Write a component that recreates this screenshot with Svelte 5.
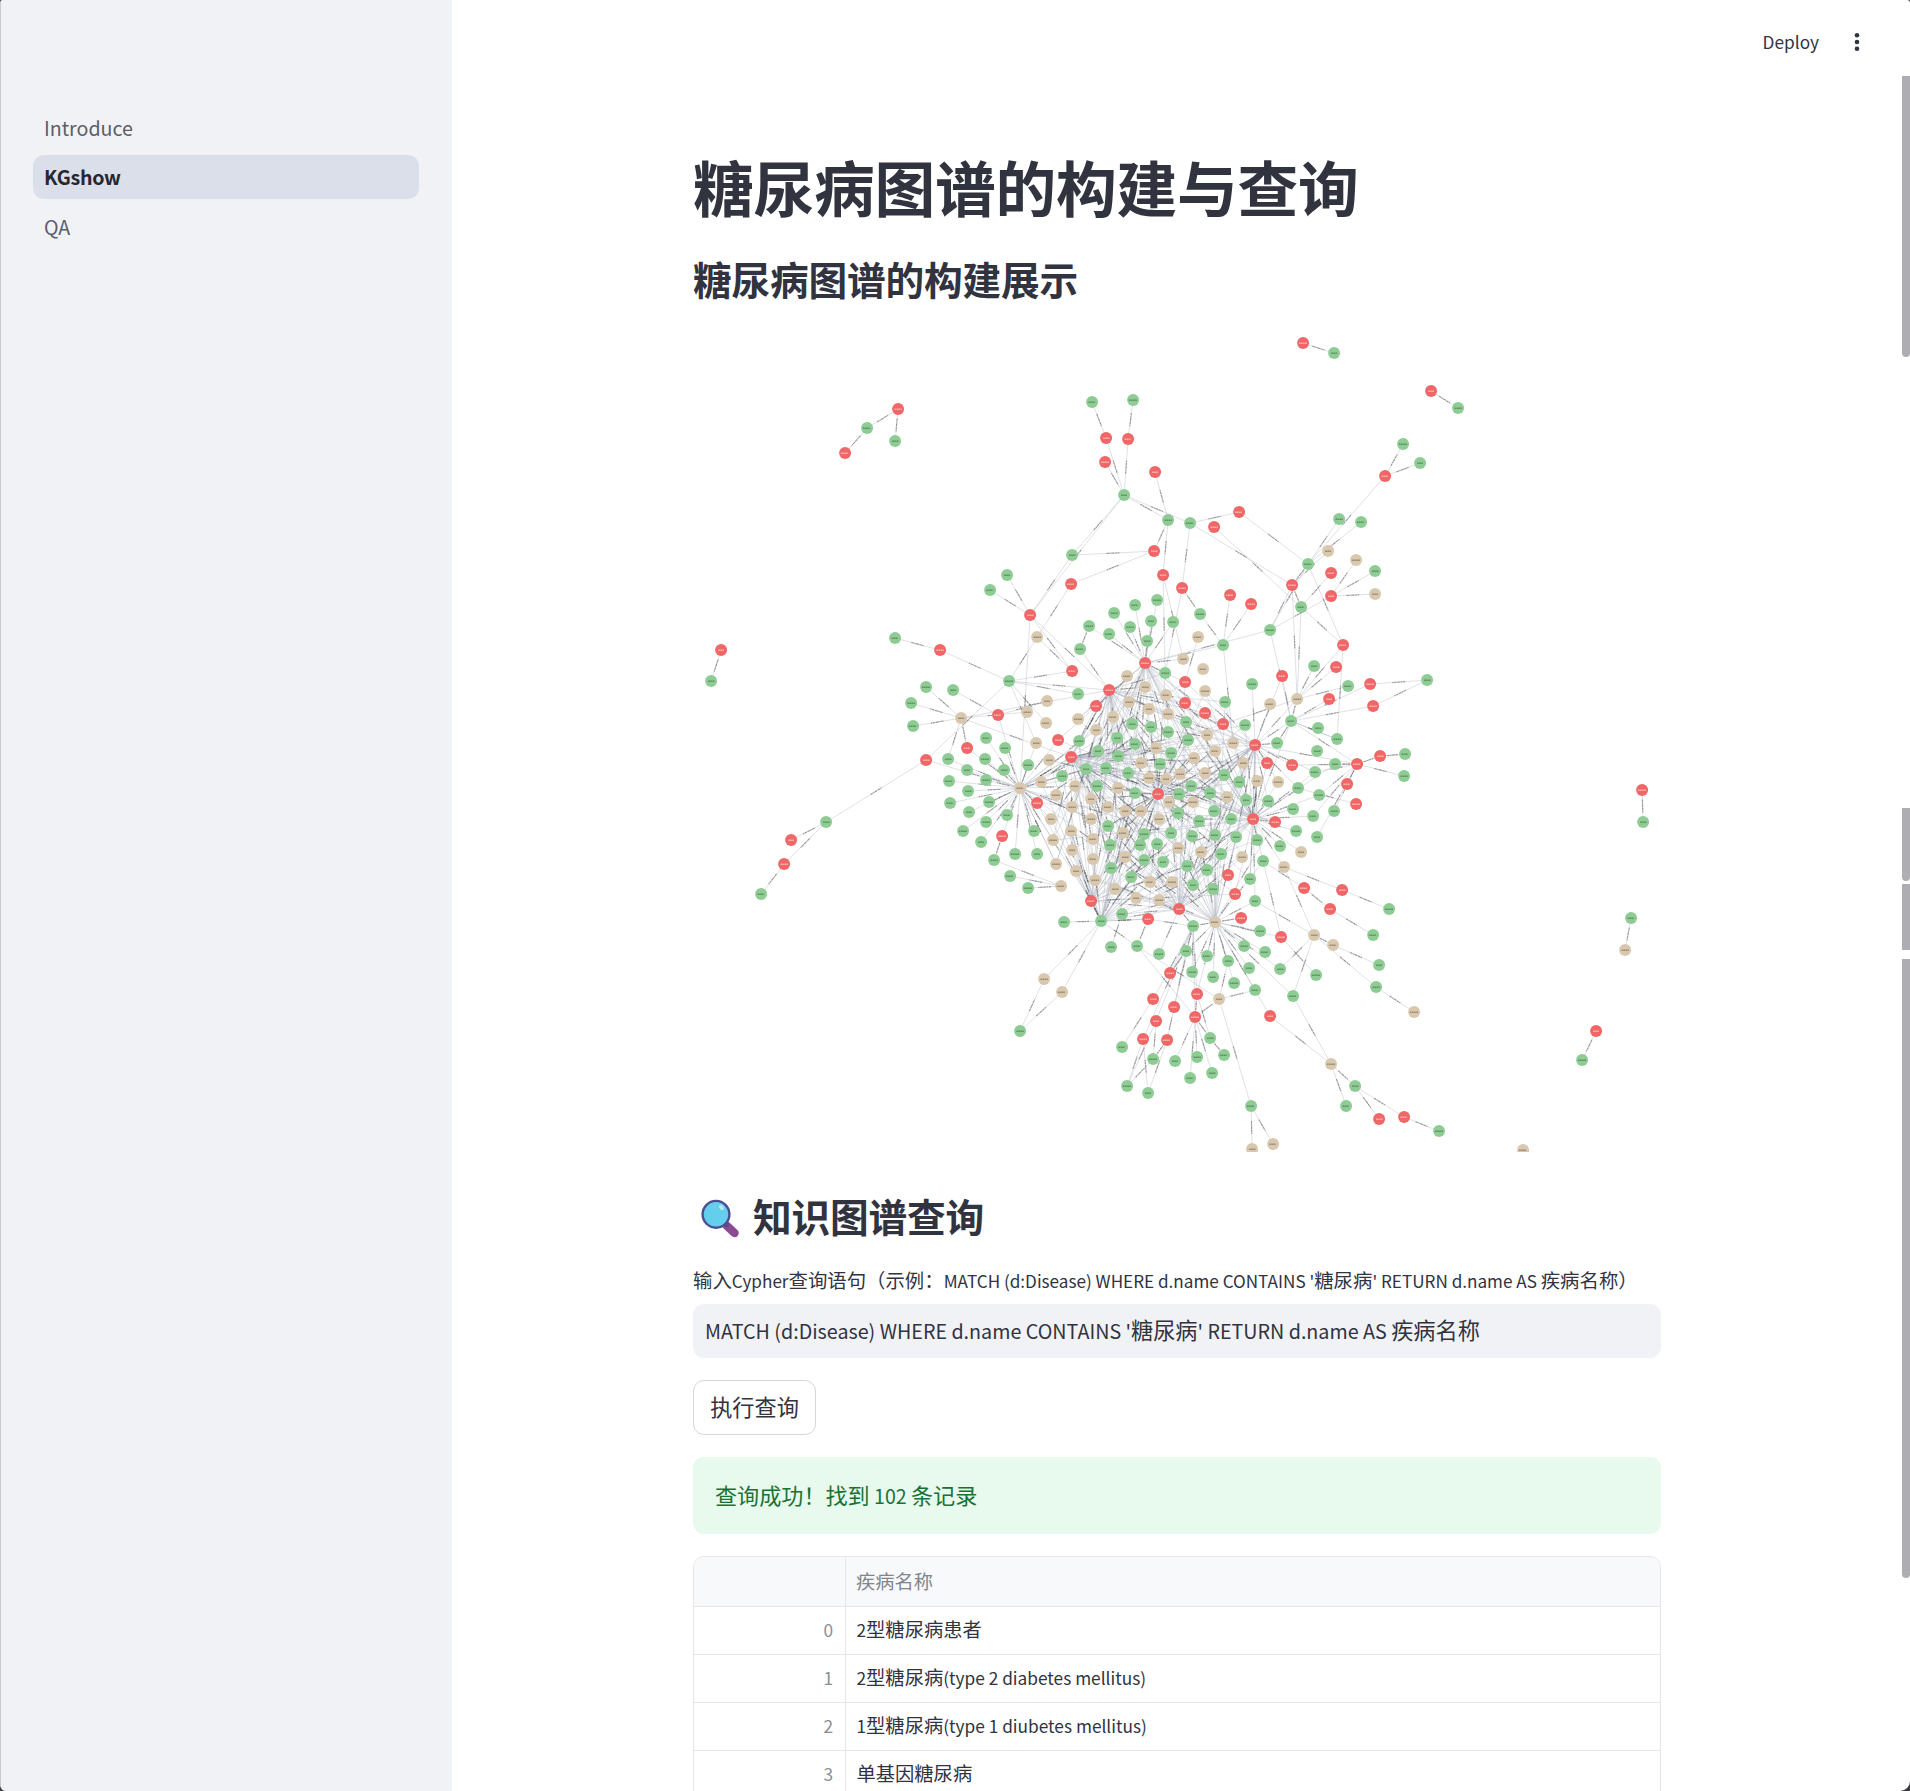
<script>
  const pages = [
    { name: 'Introduce', active: false },
    { name: 'KGshow', active: true },
    { name: 'QA', active: false }
  ];

  const query = "MATCH (d:Disease) WHERE d.name CONTAINS '糖尿病' RETURN d.name AS 疾病名称";
  const label = '输入Cypher查询语句（示例：' + query + '）';
  const rows = [
    '2型糖尿病患者',
    '2型糖尿病(type 2 diabetes mellitus)',
    '1型糖尿病(type 1 diubetes mellitus)',
    '单基因糖尿病'
  ];

  // Splits a string into Latin and Chinese runs so that each gets its own size.
  const runs = (s) =>
    (s.match(/[\x20-\x7e]+|[^\x20-\x7e]+/g) ?? []).map((t) => ({ t, latin: t.charCodeAt(0) < 127 }));

  const parse = (s) => s.trim().split(/\s+/).map((p) => p.split(',').map(Number));

  const red = parse(`
    721,650 940,650 998,715 926,760 967,748 1002,836 791,840 784,864 1071,584 1030,615 1072,671
    1145,663 1163,575 1182,588 1230,595 1185,682 1185,703 1205,713 1223,724 1109,690 1096,706
    1058,740 1331,573 1292,585 1331,596 1251,604 1343,645 1336,667 1282,676 1370,684 1329,699
    1373,706 1255,745 1071,757 1158,794 1037,803 1228,875 1235,894 1091,901 1179,909 1148,919
    1241,918 1267,763 1292,765 1357,764 1380,756 1347,784 1356,804 1253,819 1275,822 1304,888
    1342,890 1330,909 1281,937 1270,1016 1170,973 1197,994 1153,999 1174,1007 1195,1017
    1156,1021 1143,1039 1167,1040 1379,1119 1404,1117 1303,343 1431,391 898,409 845,453 1106,438
    1128,439 1105,462 1155,472 1214,527 1239,512 1154,551 1385,476 1642,790 1596,1031`);

  const green = parse(`
    711,681 895,638 926,687 953,690 911,703 913,726 948,759 986,738 985,759 967,770 986,780
    949,781 968,791 950,803 989,802 969,812 986,822 1005,748 1004,770 1007,815 963,831 981,842
    994,860 1010,876 826,822 761,894 1009,681 1007,575 1089,626 1080,649 1114,613 1135,605
    1157,600 1151,621 1130,627 1109,634 1147,641 1173,622 1200,614 1223,645 1165,673 1225,702
    1132,724 1151,727 1168,732 1186,722 1188,740 1135,744 1117,738 1078,694 1079,741 1098,751
    1171,753 1308,564 1375,571 1301,607 1270,630 1314,666 1252,684 1348,686 1427,680 1291,721
    1245,725 1318,728 1337,739 1277,743 1317,751 1405,754 1028,765 1086,769 1062,776 1106,768
    1118,756 1128,773 1160,764 1224,775 1191,786 1179,794 1210,793 1135,793 1097,786 1178,813
    1199,821 1214,811 1231,819 1108,826 1144,834 1171,833 1192,836 1215,835 1236,837 1034,831
    1015,854 1037,854 1110,845 1140,845 1157,844 1221,854 1144,860 1163,862 1187,866 1207,870
    1111,868 1131,877 1028,888 1193,885 1213,889 1122,914 1101,921 1064,922 1193,926 1335,764
    1404,776 1315,772 1239,782 1298,788 1319,795 1246,800 1268,801 1293,809 1334,811 1313,816
    1296,831 1317,837 1257,840 1280,846 1263,861 1250,879 1389,909 1255,901 1260,931 1373,935
    1111,947 1137,946 1159,954 1186,951 1192,972 1207,956 1228,961 1213,977 1234,983 1249,968
    1244,946 1265,952 1280,969 1255,990 1316,975 1379,965 1376,987 1293,996 1210,1038 1122,1047
    1153,1059 1175,1061 1197,1057 1224,1055 1212,1073 1190,1078 1127,1086 1148,1093 1020,1031
    1251,1106 1355,1086 1346,1106 1439,1131 1334,353 1458,408 867,428 895,441 1092,402 1133,400
    1124,495 1168,520 1190,523 1072,555 990,590 1403,444 1420,463 1339,519 1361,522 1643,822
    1631,918 1582,1060`);

  const tan = parse(`
    961,718 1037,637 1198,637 1183,659 1203,669 1205,691 1207,735 1233,743 1127,676 1145,687
    1166,695 1168,714 1149,709 1129,702 1113,717 1096,730 1156,748 1078,719 1047,701 1027,712
    1046,723 1036,743 1215,751 1356,560 1375,594 1297,699 1270,704 1049,760 1141,763 1149,778
    1166,779 1180,774 1194,758 1205,773 1169,802 1193,802 1227,797 1118,788 1075,786 1041,782
    1020,788 1056,795 1091,799 1072,807 1108,807 1125,811 1141,811 1159,819 1051,819 1091,819
    1123,833 1071,831 1093,839 1053,840 1072,850 1178,848 1201,852 1125,857 1093,859 1056,864
    1076,871 1095,880 1061,886 1115,889 1150,882 1172,882 1136,898 1159,900 1215,922 1243,763
    1257,781 1278,782 1301,852 1242,857 1284,867 1314,935 1333,945 1414,1012 1219,999 1044,979
    1062,992 1252,1149 1273,1144 1331,1064 1328,551 1625,950 1523,1150`);

  const nodes = [
    ...tan.map(([x, y]) => ({ x, y, kind: 'tan' })),
    ...green.map(([x, y]) => ({ x, y, kind: 'green' })),
    ...red.map(([x, y]) => ({ x, y, kind: 'red' }))
  ];

  // One hub per line, followed by the nodes that it is linked to.
  const fans = `
    1303,343 1334,353
    1431,391 1458,408
    867,428 898,409 845,453
    898,409 895,441
    1092,402 1106,438
    1133,400 1128,439
    1124,495 1106,438 1128,439 1105,462 1190,523 1030,615 1168,520
    1168,520 1155,472 1154,551 1163,575
    1190,523 1182,588 1239,512 1292,585
    1239,512 1308,564
    1072,555 1124,495 1154,551 1030,615
    1154,551 1071,584
    1030,615 1007,575 990,590 1109,690 1020,788 1072,671
    1037,637 1071,584 1009,681 1072,671
    1385,476 1403,444 1420,463 1308,564
    1308,564 1339,519 1361,522 1292,585 1343,645 1270,630
    1292,585 1328,551 1270,630 1297,699
    1331,596 1356,560 1375,571 1375,594 1270,630
    1301,607 1331,573 1214,527 1343,645 1297,699 1292,585
    1270,630 1291,721 1145,663
    1297,699 1343,645 1336,667 1348,686 1314,666 1291,721 1255,745 1223,724
    1337,739 1343,645 1291,721
    1427,680 1370,684 1373,706
    1291,721 1370,684 1373,706 1329,699 1282,676 1255,745 1357,764 1337,739 1277,743 1253,819
    1223,645 1230,595 1251,604 1200,614 1145,663 1233,743
    1200,614 1182,588
    1163,575 1165,673 1183,659
    1182,588 1165,673
    1198,637 1185,682
    1145,663 1089,626 1114,613 1135,605 1157,600 1151,621 1130,627 1109,634 1147,641 1173,622 1183,659 1185,682 1165,673
    1089,626 1080,649
    1080,649 1109,690
    1009,681 940,650 926,760 1072,671 1109,690 1078,694 1046,723 1036,743
    895,638 940,650
    961,718 926,687 911,703 913,726 948,759 967,748 1071,757 1109,690 1027,712
    998,715 953,690 1047,701 1020,788
    1020,788 967,748 948,759 986,738 985,759 967,770 986,780 949,781 968,791 950,803 989,802 969,812 986,822 1005,748 1004,770 1007,815 963,831 981,842 1002,836 926,760 1015,854 1037,854 1034,831 1037,803 1028,765 1041,782 1051,819 1056,864 1053,840 1071,757 1036,743
    1061,886 994,860 1010,876 1028,888
    1002,836 994,860
    826,822 926,760 791,840 784,864
    784,864 761,894
    721,650 711,681
    1357,764 1380,756 1404,776 1347,784 1335,764 1334,811 1319,795 1292,765 1317,837 1315,772 1313,816
    1380,756 1405,754
    1356,804 1298,788
    1253,819 1298,788 1315,772 1319,795 1293,809 1296,831 1280,846 1301,852 1313,816 1275,822 1257,840 1263,861 1284,867 1278,782 1257,781 1267,763 1335,764 1268,801 1246,800
    1255,745 1292,765 1267,763 1278,782 1298,788 1315,772 1357,764 1277,743 1282,676 1270,704 1252,684
    1284,867 1342,890 1314,935
    1342,890 1389,909
    1263,861 1304,888 1281,937 1215,922
    1304,888 1330,909
    1330,909 1373,935
    1255,901 1314,935 1215,922 1253,819
    1314,935 1333,945 1280,969 1293,996 1376,987
    1333,945 1379,965
    1376,987 1414,1012
    1281,937 1316,975
    1293,996 1331,1064 1215,922
    1270,1016 1215,922 1331,1064
    1331,1064 1355,1086 1346,1106
    1355,1086 1379,1119 1404,1117
    1404,1117 1439,1131
    1215,922 1260,931 1244,946 1265,952 1280,969 1249,968 1228,961 1207,956 1234,983 1213,977 1255,990 1241,918 1281,937 1192,972 1197,994 1186,951 1235,894 1193,926
    1219,999 1228,961 1255,990 1195,1017 1251,1106 1137,946
    1251,1106 1252,1149 1273,1144
    1193,926 1170,973 1153,999 1174,1007 1197,994 1156,1021 1179,909 1148,919 1192,972 1186,951 1143,1039
    1186,951 1170,973 1174,1007
    1153,999 1122,1047
    1127,1086 1143,1039 1156,1021 1153,1059
    1148,1093 1143,1039 1167,1040
    1153,1059 1156,1021 1167,1040
    1167,1040 1174,1007
    1195,1017 1137,946 1197,994 1175,1061 1197,1057 1212,1073 1190,1078 1210,1038 1193,926
    1210,1038 1224,1055 1197,994
    1101,921 1064,922 1044,979 1062,992 1137,946 1091,901 1148,919 1076,871 1071,831
    1020,1031 1044,979 1062,992
    1111,947 1122,914
    1137,946 1148,919
    1159,954 1179,909
    1642,790 1643,822
    1631,918 1625,950
    1596,1031 1582,1060`;

  const centre = [1158, 794];
  const hubs = parse('1253,819 1255,745 1109,690 1215,922 1071,757 1101,921 1145,663 1091,901 1179,909 1086,769 1020,788');

  const lines = fans
    .trim()
    .split('\n')
    .flatMap((row) => {
      const [hub, ...rest] = parse(row);
      return rest.map((p) => [hub, p]);
    });

  // Core nodes are tied to the central disease, to their closest hubs and to one more distant hub.
  const core = nodes.filter(({ x, y }) => ((x - 1155) / 122) ** 2 + ((y - 800) / 130) ** 2 < 1);
  core.forEach(({ x, y }, i) => {
    const p = [x, y];
    const far = (q) => Math.hypot(q[0] - x, q[1] - y);
    const sorted = [...hubs].sort((a, b) => far(a) - far(b));
    if (far(centre) < 85 ? i % 3 : i % 4 === 0) lines.push([centre, p]);
    lines.push([sorted[1 + (i % 2)], p]);
    lines.push([sorted[3 + (i % 3)], p]);
    if (i % 2) lines.push([sorted[6 + (i % 4)], p]);
  });

  const edges = lines
    .map(([[x1, y1], [x2, y2]]) => {
      const len = Math.hypot(x2 - x1, y2 - y1);
      const ux = (x2 - x1) / (len || 1);
      const uy = (y2 - y1) / (len || 1);
      const half = Math.min(6.5, Math.max(len / 2 - 7, 2));
      const mx = (x1 + x2) / 2;
      const my = (y1 + y2) / 2;
      return {
        x1, y1, x2, y2, len,
        ax: mx - ux * half, ay: my - uy * half,
        bx: mx + ux * half, by: my + uy * half
      };
    })
    .filter((e) => e.len > 1);
</script>

{#snippet mixed(text)}{#each runs(text) as run}<span class:latin={run.latin}>{run.t}</span>{/each}{/snippet}

<div class="app">
  <aside class="sidebar">
    <nav>
      {#each pages as page}
        <a class="page" class:active={page.active}><span class="latin">{page.name}</span></a>
      {/each}
    </nav>
  </aside>

  <section class="view">
    <header class="toolbar">
      <span class="deploy"><span class="latin">Deploy</span></span>
      <svg class="dots" viewBox="0 0 6 20" width="6" height="20">
        <circle cx="3" cy="3.3" r="2.3" /><circle cx="3" cy="10" r="2.3" /><circle cx="3" cy="16.7" r="2.3" />
      </svg>
    </header>

    <main class="column">
      <h1>糖尿病图谱的构建与查询</h1>
      <h2>糖尿病图谱的构建展示</h2>

      <svg class="graph" viewBox="692.9 329.9 968 822" width="968" height="822">
        <g class="links">
          {#each edges as e}
            <line x1={e.x1} y1={e.y1} x2={e.x2} y2={e.y2} />
          {/each}
        </g>
        <g class="captions">
          {#each edges as e}
            <line x1={e.ax} y1={e.ay} x2={e.bx} y2={e.by} />
          {/each}
        </g>
        {#each nodes as n, i}
          <g class={n.kind}>
            <circle cx={n.x} cy={n.y} r="6" />
            <line class="name" x1={n.x - 3 - (i % 3) * 0.6} y1={n.y + 0.2} x2={n.x + 3 + (i % 2) * 0.8} y2={n.y + 0.2} />
          </g>
        {/each}
      </svg>

      <h2 class="search">
        <svg viewBox="0 0 42 42" width="42" height="42">
          <path d="M26.5 27.5 L34.5 35" stroke="#8a4b93" stroke-width="8.5" stroke-linecap="round" />
          <path d="M24 24.5 L28 28.5" stroke="#5d4a80" stroke-width="4" />
          <circle cx="16" cy="16.3" r="13.4" fill="#63cfec" stroke="#4b4f92" stroke-width="2.4" />
          <ellipse cx="21.5" cy="9.5" rx="2" ry="3" fill="#b4e6f5" transform="rotate(-35 21.5 9.5)" />
        </svg>
        <span>知识图谱查询</span>
      </h2>

      <div class="label">{@render mixed(label)}</div>
      <div class="input">{@render mixed(query)}</div>
      <button>执行查询</button>
      <div class="alert">{@render mixed('查询成功！找到 102 条记录')}</div>

      <div class="table">
        <div class="row head"><div class="index"></div><div class="cell">疾病名称</div></div>
        {#each rows as row, i}
          <div class="row">
            <div class="index"><span class="latin">{i}</span></div>
            <div class="cell">{@render mixed(row)}</div>
          </div>
        {/each}
      </div>
    </main>
  </section>

  <div class="scrollbars">
    <i class="thumb first"></i>
    <i class="thumb second"></i>
    <i class="thumb third"></i>
    <i class="thumb fourth"></i>
  </div>
</div>

<style>
  :global(body) {
    background: #3c3c40;
  }
  .app {
    position: relative;
    display: flex;
    box-sizing: border-box;
    width: 1910px;
    height: 1791px;
    overflow: hidden;
    border-left: 1px solid #cbccd0;
    border-radius: 3px 3px 10px 6px;
    background: #fff;
    color: #31333f;
    font-family: 'Noto Sans CJK SC', 'Noto Sans', sans-serif;
    font-size: 22.2px;
  }
  .latin {
    font-size: 0.885em;
    white-space: pre;
  }
  .sidebar {
    flex: none;
    width: 451px;
    background: #f0f2f6;
  }
  nav {
    display: flex;
    flex-direction: column;
    gap: 5.5px;
    padding: 105.5px 33px 0 32px;
  }
  .page {
    display: flex;
    align-items: center;
    box-sizing: border-box;
    height: 44px;
    padding-left: 11px;
    border-radius: 11px;
    color: #5c5e6a;
  }
  .active {
    padding-bottom: 1px;
    background: #dadfe9;
    color: #262730;
    font-weight: 600;
    letter-spacing: -0.25px;
  }
  .view {
    flex: 1;
    display: flex;
    flex-direction: column;
  }
  .toolbar {
    display: flex;
    flex: none;
    align-items: center;
    justify-content: flex-end;
    gap: 35px;
    height: 84px;
    padding-right: 50px;
    font-size: 19.5px;
  }
  .deploy {
    padding-bottom: 3px;
  }
  .dots {
    fill: #31333f;
  }
  .column {
    display: flex;
    flex-direction: column;
    align-items: flex-start;
    width: 968px;
    margin-left: 241px;
  }
  h1,
  h2 {
    flex: none;
    margin: 0;
    font-weight: 700;
    letter-spacing: -0.005em;
    white-space: nowrap;
  }
  h1 {
    height: 74px;
    margin-top: 65px;
    font-size: 60.8px;
    line-height: 74px;
  }
  h2 {
    height: 48px;
    margin-top: 31px;
    font-size: 38.7px;
    line-height: 48px;
  }
  .graph {
    flex: none;
    display: block;
    margin-top: 28px;
    overflow: hidden;
  }
  .links line {
    stroke: #a5abba;
    stroke-width: 0.6;
    stroke-opacity: 0.6;
  }
  .captions line {
    stroke: #333;
    stroke-width: 1.2;
    stroke-opacity: 0.42;
    stroke-dasharray: 2.4 0.6 1.3 0.5 3 0.7;
  }
  .green circle {
    fill: #8dcc93;
  }
  .red circle {
    fill: #f16667;
  }
  .tan circle {
    fill: #d9c8ae;
  }
  .name {
    stroke: #222;
    stroke-width: 1.6;
    stroke-opacity: 0.36;
    stroke-dasharray: 1.7 0.4;
  }
  .red .name {
    stroke: #fff;
    stroke-opacity: 0.5;
  }
  .search {
    display: flex;
    align-items: center;
    gap: 11px;
    margin-top: 42px;
    padding-left: 7px;
  }
  .search svg {
    margin-top: 2px;
    fill: none;
  }
  .search span {
    padding-bottom: 6px;
  }
  .label {
    height: 30px;
    margin-top: 24px;
    font-size: 19.4px;
    line-height: 28px;
    white-space: nowrap;
  }
  .input {
    box-sizing: border-box;
    width: 968px;
    height: 54px;
    margin-top: 7.5px;
    padding-left: 12px;
    border-radius: 11px;
    background: #f0f2f6;
    line-height: 51px;
    white-space: nowrap;
  }
  .label .latin {
    font-size: 0.884em;
  }
  .input .latin {
    font-size: 0.887em;
  }
  button {
    box-sizing: border-box;
    width: 123px;
    height: 55px;
    margin-top: 22.5px;
    padding: 0 0 4px;
    border: 1px solid #d6d6d9;
    border-radius: 11px;
    background: #fff;
    color: inherit;
    font: inherit;
  }
  .alert {
    box-sizing: border-box;
    width: 968px;
    height: 77px;
    margin-top: 22px;
    padding-left: 22px;
    border-radius: 11px;
    background: #e8f9ee;
    color: #177233;
    font-size: 22.1px;
    line-height: 75px;
  }
  .table {
    box-sizing: border-box;
    width: 968px;
    height: 260px;
    margin-top: 22px;
    overflow: hidden;
    border: 1px solid #e6e6ea;
    border-radius: 11px;
    font-size: 19.3px;
  }
  .table .latin {
    font-size: 0.895em;
  }
  .row {
    display: flex;
    box-sizing: border-box;
    height: 48.1px;
    border-bottom: 1px solid #e6e6ea;
    line-height: 45px;
  }
  .head {
    height: 50px;
    background: #f8f9fb;
    color: #83858e;
    line-height: 48px;
  }
  .index {
    box-sizing: border-box;
    width: 152px;
    padding-right: 12px;
    border-right: 1px solid #e6e6ea;
    color: #8b8d95;
    text-align: right;
  }
  .cell {
    padding-left: 10.5px;
    white-space: nowrap;
  }
  .head .cell {
    padding-left: 10px;
  }
  .scrollbars {
    position: absolute;
    top: 76px;
    right: 0;
    width: 8px;
  }
  .thumb {
    display: block;
    background: #adadb2;
  }
  .first {
    height: 281px;
    border-radius: 0 0 4px 4px;
  }
  .second {
    height: 73px;
    margin-top: 451px;
    border-radius: 0 0 4px 4px;
  }
  .third {
    height: 66px;
    margin-top: 3px;
  }
  .fourth {
    height: 619px;
    margin-top: 9px;
    border-radius: 0 0 4px 4px;
  }
</style>
